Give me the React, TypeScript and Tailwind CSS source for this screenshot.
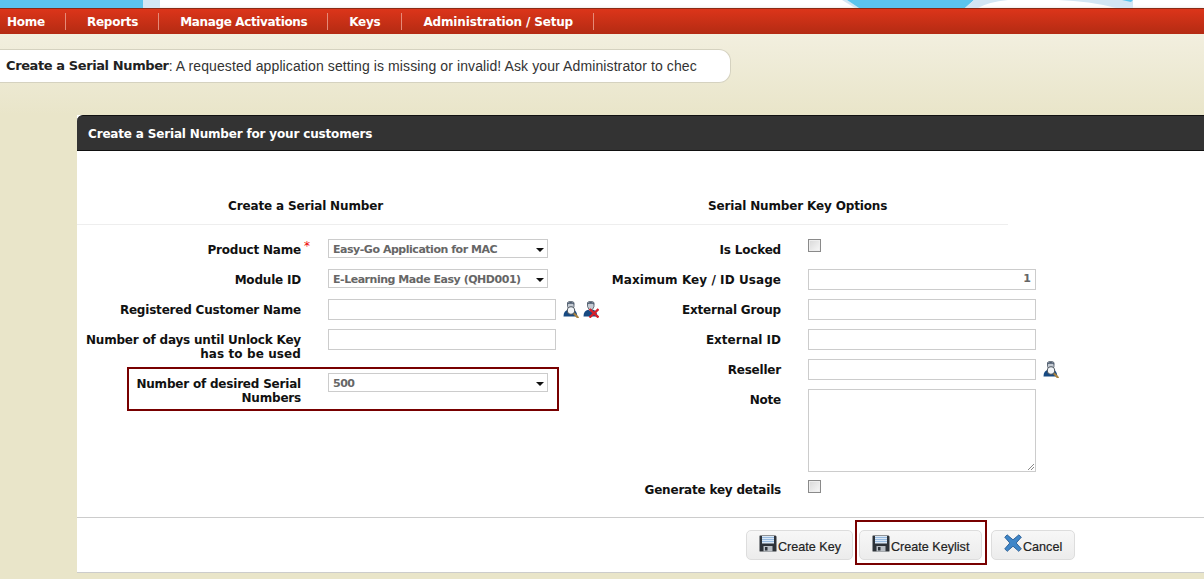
import React from "react";

const V = "font-['DejaVu_Sans',Verdana,sans-serif]";
const A = "font-['Liberation_Sans',Arial,sans-serif]";

function Person({ x = false }: { x?: boolean }) {
  return (
    <svg width="16" height="17" viewBox="0 0 16 17" className="shrink-0">
      <path d="M4.500 1.500 6 .6h3.500l1.500 1v4L9.500 8.500h-3.500L4.500 5.500z" fill="#c4cad2" stroke="#46525f" strokeWidth="0.8" />
      <path d="M4.200 3.800 C4.200 .2 11.300 .2 11.300 3.800 L9.800 2.800 H5.700z" fill="#46566a" />
      <path d="M.5 15.500c0-4 1.800-6 4.800-6.700l2.400 1.400 2.400-1.400c2.500.6 4 2.700 4.300 6.700z" fill="#174a82" />
      {x ? (
        <g stroke="#d61f2a" strokeWidth="2.400">
          <path d="M6.500 8l9 8.500M15.500 8l-9 8.500" />
        </g>
      ) : (
        <g>
          <path d="M10.800 12.200l4 4.200" stroke="#a9833f" strokeWidth="2.200" strokeLinecap="round" />
          <circle cx="8" cy="9.500" r="3.700" fill="#f2f5f8" stroke="#4d5660" strokeWidth="1.100" />
        </g>
      )}
    </svg>
  );
}

function Disk() {
  return (
    <svg width="18" height="17" viewBox="0 0 18 17" className="shrink-0">
      <path d="M1 .5h15.500l1 1V16a.5.5 0 0 1-.5.5H1a.5.5 0 0 1-.5-.5V1a.5.5 0 0 1 .5-.5z" fill="#2d3238" />
      <rect x="3" y="1" width="12" height="7.500" fill="#dbe8f6" />
      <path d="M3 2.500h12M3 4.500h12M3 6.500h12" stroke="#8fb4dc" strokeWidth="0.9" />
      <rect x="4.500" y="11" width="9" height="5.500" fill="#b9bec4" />
      <rect x="6" y="12" width="2.500" height="3.500" fill="#2d3238" />
    </svg>
  );
}

function Cross() {
  return (
    <svg width="18" height="18" viewBox="0 0 17 17" className="shrink-0">
      <path
        d="M3 .8 8.500 5.500 14 .8 16.400 3 11.500 8.500 16.400 14 14 16.400 8.500 11.500 3 16.400.7 14 5.500 8.500.7 3z"
        fill="#3f86c8"
        stroke="#23588f"
        strokeWidth="0.8"
      />
    </svg>
  );
}

function Caret() {
  return <span className="ml-auto mr-[3px] h-0 w-0 shrink-0 border-x-[4px] border-t-[4px] border-x-transparent border-t-[#111]" />;
}

function Select({ value }: { value: string }) {
  return (
    <div className={`flex h-[19px] w-[220px] items-center border border-[#ccc] bg-white pl-[4px] pt-[2px] text-[11px] font-bold tracking-[-0.47px] text-[#666] ${V}`}>
      <span className="mt-[1px]">{value}</span>
      <Caret />
    </div>
  );
}

function Input({ value }: { value?: string }) {
  return (
    <div className={`flex h-[21px] w-[228px] items-center justify-end border border-[#ccc] bg-white pr-[4px] text-[11px] font-bold text-[#666] ${V}`}>
      {value}
    </div>
  );
}

function Check({ className = "" }: { className?: string }) {
  return <span className={`block h-[13px] w-[13px] border border-[#8a8a8a] bg-gradient-to-br from-[#d8d8d8] to-[#f8f8f8] shadow-[inset_0_0_0_1px_#eee] ${className}`} />;
}

const labelCls = `text-right text-[12px] leading-[14px] font-bold tracking-[-0.2px] text-[#111] ${V}`;

function Row({ label, children, h = "h-[30px]" }: { label: React.ReactNode; children: React.ReactNode; h?: string }) {
  return (
    <div className={`flex ${h} items-start gap-[27px]`}>
      <div className={`w-[224px] shrink-0 pt-[4px] ${labelCls}`}>{label}</div>
      <div className="flex items-center gap-[5px]">{children}</div>
    </div>
  );
}

function Btn({ icon, label, w }: { icon: React.ReactNode; label: string; w: string }) {
  return (
    <div className={`flex h-[30px] ${w} items-center justify-start gap-[1px] rounded-[5px] border border-[#ddd] bg-gradient-to-b from-[#f7f7f7] to-[#ececec] pl-[12px] text-[12.6px] text-[#222] [-webkit-text-stroke:0.2px_#222] ${A}`}>
      <span className="mt-[-4px]">{icon}</span>
      <span className="mt-[4px]">{label}</span>
    </div>
  );
}

export default function App() {
  const nav = [
    { t: "Home", c: "pl-[7px] pr-[20px] tracking-[-0.25px]" },
    { t: "Reports", c: "pl-[21px] pr-[20px] tracking-[-0.25px]" },
    { t: "Manage Activations", c: "pl-[21px] pr-[20px] tracking-[-0.36px]" },
    { t: "Keys", c: "pl-[21px] pr-[21px] tracking-[-0.25px]" },
    { t: "Administration / Setup", c: "pl-[21px] pr-[20px] tracking-[-0.16px]" },
  ];
  return (
    <div className="relative h-[579px] w-[1204px] overflow-hidden bg-[#e9e5c9]">
      <div className="h-[8px] overflow-hidden bg-white">
        <svg width="1204" height="8" viewBox="0 0 1204 8" className="block">
          <rect x="0" y="0" width="143" height="8" fill="#5bc4ee" />
          <rect x="143" y="0" width="17" height="8" fill="#d2e6f4" />
          <path d="M842 0h5l12 8h-4z" fill="#d2e6f4" />
          <path d="M847 0h127l-9 8H859z" fill="#5bc4ee" />
          <path d="M974 0h34Q988 2 978 8h-13z" fill="#d2e6f4" />
          <path d="M1058 0h75v8h-17Q1090 1 1058 0z" fill="#d2e6f4" />
          <path d="M1122 0h11l-2 2z" fill="#5bc4ee" />
        </svg>
      </div>
      <nav className="flex h-[26px] items-center border-t border-[#8a2a15] bg-gradient-to-b from-[#dc351a] to-[#b42b13] shadow-[0_2px_4px_rgba(70,60,30,.55)]">
        {nav.map((n) => (
          <div key={n.t} className={`flex h-[17px] items-center border-r border-[#e58a78] text-[12px] font-bold text-white ${V} ${n.c}`}>
            {n.t}
          </div>
        ))}
      </nav>
      <div className="h-[81px] bg-gradient-to-b from-[#f2efdf] to-[#e9e5c9] pt-[15px]">
        <div className="flex h-[34px] w-[731px] items-center overflow-hidden rounded-r-[12px] border border-l-0 border-[#d5d2c0] bg-white pl-[6px] text-[14px] text-[#333]">
          <span className={`text-[13px] font-bold tracking-[-0.4px] text-[#222] ${V}`}>Create a Serial Number</span>
          <span className={`tracking-[0.105px] ${A}`}>: A requested application setting is missing or invalid! Ask your Administrator to chec</span>
        </div>
      </div>
      <main className="ml-[77px] w-[1140px] border-b border-[#ccc] bg-white">
        <div className={`flex h-[36px] items-center rounded-t-[6px] border-y border-[#111] bg-[#333] pl-[11px] pt-[1px] text-[12px] font-bold tracking-[-0.17px] text-white ${V}`}>
          Create a Serial Number for your customers
        </div>
        <div className="h-[366px]">
          <div className={`flex h-[74px] w-[931px] items-end border-b border-[#eee] pb-[9px] text-[12px] font-bold tracking-[-0.15px] text-[#111] ${V}`}>
            <div className="w-[457px] text-center">Create a Serial Number</div>
            <div className="w-[174px]" />
            <div>Serial Number Key Options</div>
          </div>
          <div className="flex pt-[14px]">
            <div className="w-[480px]">
              <Row label={<span className="relative">Product Name<span className="absolute left-[100%] top-[-4px] ml-[3px] font-normal text-[#e00]">*</span></span>}>
                <Select value="Easy-Go Application for MAC" />
              </Row>
              <Row label="Module ID"><Select value="E-Learning Made Easy (QHD001)" /></Row>
              <Row label="Registered Customer Name">
                <Input />
                <span className="ml-[2px]"><Person /></span>
                <span className="ml-[-1px]"><Person x /></span>
              </Row>
              <Row h="h-[38px]" label={<>Number of days until Unlock Key <span className="tracking-[0.1px]">has to be used</span></>}><Input /></Row>
              <div className="ml-[50px] h-[44px] w-[432px] border-2 border-[#780000]">
                <div className="flex items-start gap-[27px] pt-[4px]">
                  <div className={`w-[172px] pt-[4px] ${labelCls}`}>Number of desired Serial Numbers</div>
                  <Select value="500" />
                </div>
              </div>
            </div>
            <div className="w-[600px]">
              <Row label="Is Locked"><Check /></Row>
              <Row label={<span className="tracking-[0.07px]">Maximum Key / ID Usage</span>}><Input value="1" /></Row>
              <Row label="External Group"><Input /></Row>
              <Row label={<span className="tracking-[0px]">External ID</span>}><Input /></Row>
              <Row label="Reseller"><Input /><span className="ml-[2px]"><Person /></span></Row>
              <Row h="h-[90px]" label="Note">
                <div className="relative h-[83px] w-[228px] border border-[#ccc] bg-white">
                  <svg width="8" height="8" className="absolute bottom-0 right-0"><path d="M1 7l6-6M4 7l3-3" stroke="#888" strokeWidth="1" /></svg>
                </div>
              </Row>
              <Row label="Generate key details"><Check className="mt-[1px]" /></Row>
            </div>
          </div>
        </div>
        <div className="flex h-[55px] items-center gap-[5px] border-t border-[#ccc] pl-[669px]">
          <Btn icon={<Disk />} label="Create Key" w="w-[107px]" />
          <div className="mb-[5px] ml-[-3px] mr-[-1px] flex h-[45px] items-start border-2 border-[#780000] pb-0 pl-[2px] pr-[3px] pt-[8px]">
            <Btn icon={<Disk />} label="Create Keylist" w="w-[123px]" />
          </div>
          <Btn icon={<Cross />} label="Cancel" w="w-[84px]" />
        </div>
      </main>
    </div>
  );
}
